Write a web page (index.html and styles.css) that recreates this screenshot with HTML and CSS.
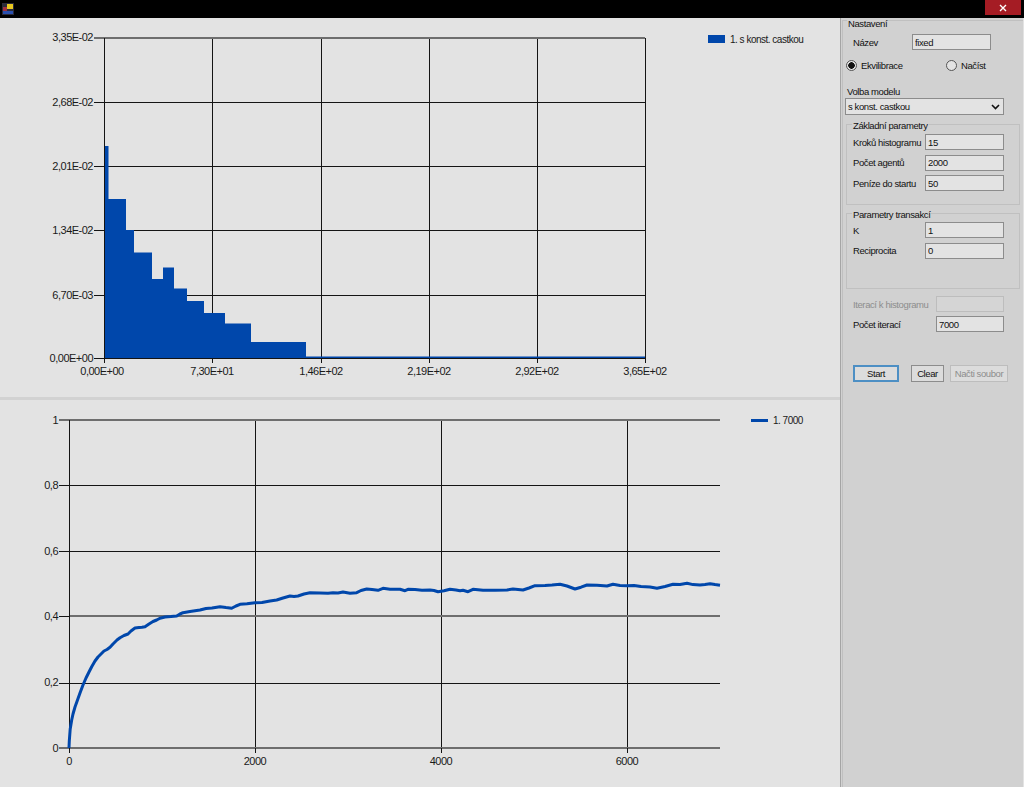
FILE: index.html
```html
<!DOCTYPE html>
<html lang="cs">
<head>
  <meta charset="UTF-8">
  <title>Model</title>
  <link rel="stylesheet" href="styles.css">
</head>
<body>
  <div class="titlebar">
    <svg class="app-icon" width="12" height="12" viewBox="0 0 12 12">
      <rect width="12" height="12" fill="#2b2b3a"/>
      <rect x="5" y="1" width="6" height="5" fill="#e8c820"/>
      <rect x="1" y="4" width="4" height="4" fill="#a03040"/>
      <rect x="1" y="8" width="10" height="3" fill="#2a50b0"/>
    </svg>
    <div class="close">
      <svg width="8" height="8" viewBox="0 0 8 8"><path d="M1 1 L7 7 M7 1 L1 7" stroke="#fff" stroke-width="1.4"/></svg>
    </div>
  </div>

  <div class="main">
    <div class="charts">
      <svg class="chart chart-top" viewBox="0 18 840 379">
        <g class="grid">
          <path d="M212 38V358M321 38V358M429 38V358M537 38V358M645 38V358"/>
          <path d="M104 102H645M104 166H645M104 230H645M104 295H645"/>
        </g>
        <path class="bars" d="M104 358V146H108.500V199H126V230H134V252.500H152V279H163V267.500H174V288.500H187V301H204V313H225V323.500H251V342H306V356.500H645V358Z"/>
        <g class="axis">
          <path class="thick" d="M94 38H645"/>
          <path d="M94 102H104M94 166H104M94 230H104M94 295H104"/>
          <path d="M94 358H645M104 38V363M212 358V363M321 358V363M429 358V363M537 358V363M645 358V363"/>
        </g>
        <g class="labels right">
          <text x="93" y="41">3,35E-02</text>
          <text x="93" y="106">2,68E-02</text>
          <text x="93" y="170">2,01E-02</text>
          <text x="93" y="234">1,34E-02</text>
          <text x="93" y="299">6,70E-03</text>
          <text x="93" y="362">0,00E+00</text>
        </g>
        <g class="labels middle">
          <text x="102" y="375">0,00E+00</text>
          <text x="212" y="375">7,30E+01</text>
          <text x="321" y="375">1,46E+02</text>
          <text x="429" y="375">2,19E+02</text>
          <text x="537" y="375">2,92E+02</text>
          <text x="645" y="375">3,65E+02</text>
        </g>
        <rect class="swatch" x="708" y="35" width="17" height="8"/>
        <text class="legend" x="730" y="43">1. s konst. castkou</text>
      </svg>

      <div class="splitter"></div>

      <svg class="chart chart-bottom" viewBox="0 400 840 387">
        <g class="grid">
          <path d="M255 420V748M441 420V748M627 420V748"/>
          <path d="M69 485H720M69 551H720M69 683H720"/>
          <path class="thick" d="M69 616H720"/>
        </g>
        <g class="axis">
          <path class="thick" d="M59 420H720"/>
          <path d="M59 485H69M59 551H69M59 616H69M59 683H69"/>
          <path class="thick" d="M59 748H720"/>
          <path d="M69 420V753M255 748V753M441 748V753M627 748V753"/>
        </g>
        <path class="curve" d="M69 748L69.300 741L70.200 729L71.700 720L73 714L75 707L77.500 700L80 693L83 685L86 678L89 672L91.700 666.700L95 661L98 657L100 655L104 651L107 649.500L110 647.300L113 644L117 640L120 637.700L124 635.500L128 634L131 631L135 628L139 627.500L142 627.200L145 626.700L149 624L153 621.500L156.700 620L160 618.200L165 617L171 616.600L176.700 616L180 614L183 612.700L190 611.500L195 610.800L200 610L206 608.500L212 608L220 606.700L226 607.600L231.700 608.300L236 606L240 604.300L247 603.800L255 602.700L262 602.500L270 601L276.700 600L283 598L290 596L294 596.500L298 596L304 594L310 592.700L320 593L328 593.200L333 592.700L338 593L343 592L350 593.300L356.700 592.700L361 590.500L366.700 589L372 589.500L378 590.300L383 588.300L390 589.200L400 589.300L405 590.700L408 589.300L415 589.600L422 590.200L430 590L434 590.500L438 591.700L444 590.800L450 589.300L456 590L460 590.800L463 590.200L468 591.700L473 589.300L478 589.800L483 590.300L495 590.300L507 590L513 589L518 589.500L523 590L529 588L535 585.700L545 585.400L552 585L560 584.300L567 586L575 589L581 587.200L587 585L597 585.200L607 586L613 584.300L620 585.400L627 585.700L634 585.400L641 586.600L650 587L657 588.300L665 586.500L673 584.300L680 584.500L687 583.300L693 584.600L700 585L705 584.500L710 583.700L715 584.600L720 585.300"/>
        <g class="labels right">
          <text x="58" y="424">1</text>
          <text x="58" y="489">0,8</text>
          <text x="58" y="555">0,6</text>
          <text x="58" y="620">0,4</text>
          <text x="58" y="686">0,2</text>
          <text x="58" y="752">0</text>
        </g>
        <g class="labels middle">
          <text x="69" y="765">0</text>
          <text x="255" y="765">2000</text>
          <text x="441" y="765">4000</text>
          <text x="627" y="765">6000</text>
        </g>
        <path class="legend-line" d="M751 420.500H768"/>
        <text class="legend" x="773" y="424">1. 7000</text>
      </svg>
    </div>

    <div class="side">
      <div class="group outer">
        <span class="group-title">Nastavení</span>

        <div class="row row-name">
          <label class="w-name">Název</label>
          <input class="field w79" type="text" value="fixed">
        </div>

        <div class="radios">
          <span class="radio-item first"><span class="radio checked"></span>Ekvilibrace</span>
          <span class="radio-item"><span class="radio"></span>Načíst</span>
        </div>

        <div class="model-label">Volba modelu</div>
        <div class="select">
          <span>s konst. castkou</span>
          <svg width="9" height="6" viewBox="0 0 9 6"><path d="M1 1 L4.500 4.500 L8 1" fill="none" stroke="#111" stroke-width="1.600"/></svg>
        </div>

        <div class="group inner h-basic">
          <span class="group-title">Základní parametry</span>
          <div class="row"><label class="w-param">Kroků histogramu</label><input class="field w79" type="text" value="15"></div>
          <div class="row"><label class="w-param">Počet agentů</label><input class="field w79" type="text" value="2000"></div>
          <div class="row"><label class="w-param">Peníze do startu</label><input class="field w79" type="text" value="50"></div>
        </div>

        <div class="group inner h-trans">
          <span class="group-title">Parametry transakcí</span>
          <div class="row"><label class="w-param">K</label><input class="field w79" type="text" value="1"></div>
          <div class="row"><label class="w-param">Reciprocita</label><input class="field w79" type="text" value="0"></div>
        </div>

        <div class="iter">
          <div class="row disabled"><label class="w-iter">Iterací k histogramu</label><input class="field w68" type="text" disabled></div>
          <div class="row"><label class="w-iter">Počet iterací</label><input class="field w68" type="text" value="7000"></div>
        </div>

        <div class="buttons">
          <button class="btn btn-start" type="button">Start</button>
          <button class="btn btn-clear" type="button">Clear</button>
          <button class="btn btn-load" type="button" disabled>Načti soubor</button>
        </div>
      </div>
    </div>
  </div>
</body>
</html>
```

FILE: styles.css
```css
html, body {
  margin: 0;
  padding: 0;
  width: 1024px;
  height: 787px;
  overflow: hidden;
  background: #e3e3e3;
  font-family: "Liberation Sans", sans-serif;
  font-size: 9.500px;
  letter-spacing: -0.4px;
  color: #111;
}
.titlebar {
  height: 18px;
  background: #000;
  display: flex;
  align-items: flex-start;
  justify-content: space-between;
  padding-left: 2px;
  padding-right: 3px;
  box-sizing: border-box;
}
.app-icon {
  margin-top: 3px;
}
.close {
  width: 36px;
  height: 15px;
  background: #a51c24;
  display: flex;
  align-items: center;
  justify-content: center;
}
.main {
  display: flex;
  height: 769px;
}

/* charts */
.charts {
  width: 840px;
  display: flex;
  flex-direction: column;
}
.chart {
  display: block;
  width: 840px;
}
.chart-top {
  height: 379px;
}
.chart-bottom {
  height: 387px;
}
.splitter {
  height: 3px;
  background: #d2d2d2;
}
.grid path, .axis path {
  fill: none;
  stroke: #141414;
  stroke-width: 1;
  shape-rendering: crispEdges;
}
.grid path.thick, .axis path.thick {
  stroke: #6e6e6e;
  stroke-width: 2;
}
.bars {
  fill: #0047ab;
}
.curve {
  fill: none;
  stroke: #0047ab;
  stroke-width: 3;
  stroke-linejoin: round;
}
.labels text, .legend {
  font-family: "Liberation Sans", sans-serif;
  font-size: 11px;
  letter-spacing: -0.5px;
  fill: #1a1a1a;
}
.legend {
  font-size: 10px;
}
.labels.right text {
  text-anchor: end;
}
.labels.middle text {
  text-anchor: middle;
}
.swatch {
  fill: #0047ab;
}
.legend-line {
  fill: none;
  stroke: #0047ab;
  stroke-width: 3;
}

/* settings panel */
.side {
  width: 183px;
  background: #d1d1d1;
  border-left: 1px solid #a5a5a5;
  box-sizing: border-box;
  padding: 2px 0 0 1px;
  display: flex;
}
.group {
  position: relative;
  border: 1px solid #c0c0c0;
  box-sizing: border-box;
}
.group-title {
  position: absolute;
  top: -3px;
  left: 4px;
  padding: 0 1px;
  line-height: 12px;
  background: #d1d1d1;
}
.inner .group-title {
  top: -5px;
  left: 5px;
}
.outer {
  flex: 1;
  border-right: 0;
  border-bottom: 0;
  padding: 13px 0 0 2px;
}
.inner {
  width: 174px;
  margin: 9px 0 0 1px;
  padding: 9px 0 0 6px;
  display: flex;
  flex-direction: column;
  gap: 4.500px;
}
.h-basic {
  height: 81px;
}
.h-trans {
  height: 76px;
  margin-top: 8px;
  padding-top: 8px;
}
.row {
  display: flex;
  align-items: center;
  height: 16px;
}
.row-name {
  margin-left: 8px;
}
label {
  white-space: nowrap;
}
.w-name {
  width: 59px;
}
.w-param {
  width: 72px;
}
.w-iter {
  width: 83px;
}
.field {
  box-sizing: border-box;
  height: 16px;
  margin: 0;
  padding: 0 2px;
  background: #e3e3e3;
  border: 1px solid #8c8c8c;
  font: inherit;
  letter-spacing: inherit;
  color: #111;
  outline: none;
}
.w79 {
  width: 79px;
}
.w68 {
  width: 68px;
}
.radios {
  display: flex;
  margin: 8px 0 0 1px;
  height: 14px;
  align-items: center;
}
.radio-item {
  display: flex;
  align-items: center;
  gap: 4px;
}
.radio-item.first {
  width: 100px;
}
.radio {
  box-sizing: border-box;
  width: 11px;
  height: 11px;
  border: 1px solid #555;
  border-radius: 50%;
  background: #e3e3e3;
  display: block;
}
.radio.checked {
  background: radial-gradient(circle, #111 0, #111 3px, #e3e3e3 3.500px);
}
.model-label {
  margin-top: 14px;
  line-height: 12px;
  margin-left: 2px;
}
.select {
  box-sizing: border-box;
  width: 159px;
  height: 17px;
  padding: 0 3px 0 2px;
  background: #e3e3e3;
  border: 1px solid #8c8c8c;
  display: flex;
  align-items: center;
  justify-content: space-between;
}
.iter {
  margin: 7px 0 0 8px;
  display: flex;
  flex-direction: column;
  gap: 4px;
}
.disabled label {
  color: #8d8d8d;
}
.disabled .field {
  background: #d5d5d5;
  border-color: #bdbdbd;
}
.buttons {
  display: flex;
  margin: 33px 0 0 8px;
}
.btn {
  box-sizing: border-box;
  height: 17px;
  margin: 0;
  padding: 0;
  background: #dcdcdc;
  border: 1px solid #8c8c8c;
  font: inherit;
  letter-spacing: inherit;
  color: #111;
  white-space: nowrap;
}
.btn-start {
  width: 46px;
  border: 2px solid #4d8fc4;
}
.btn-clear {
  width: 33px;
  margin-left: 12px;
}
.btn-load {
  width: 58px;
  margin-left: 6px;
  color: #8d8d8d;
  border-color: #bdbdbd;
}
```
